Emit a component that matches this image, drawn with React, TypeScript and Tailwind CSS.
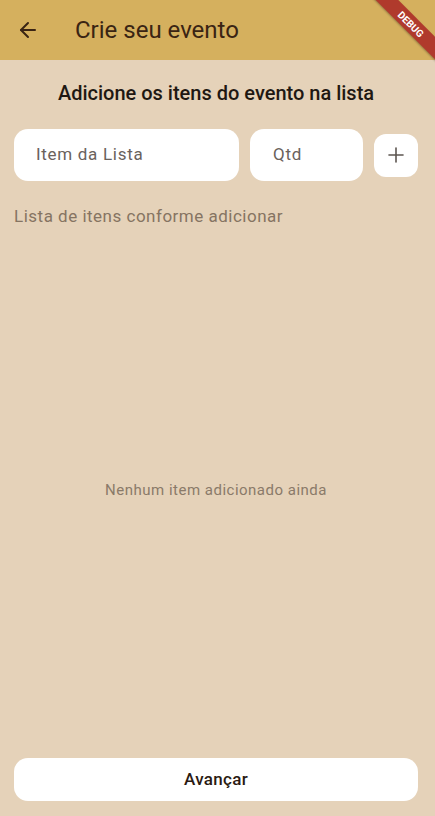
import { ArrowLeft, Plus } from "lucide-react";

const App = () => {
  return (
    <div
      className="relative flex h-[816px] w-full flex-col overflow-hidden bg-[#e5d2b9]"
      style={{ fontFamily: "Roboto, 'Noto Sans', sans-serif" }}
    >
      {/* cabeçalho */}
      <header className="flex h-[60px] shrink-0 items-center bg-[#d5b05e] px-4">
        <ArrowLeft className="h-6 w-6 text-[#3a2413]" strokeWidth={2} />
        <h1 className="ml-[35px] text-[24px] text-[#3a2413]">Crie seu evento</h1>
      </header>

      {/* faixa debug */}
      <div className="pointer-events-none absolute right-[-26px] top-[16px] flex h-[16px] w-[100px] rotate-45 items-center justify-center bg-[#b03a2c] text-[10px] font-bold text-white shadow-[0_1px_2px_rgba(0,0,0,0.3)]">
        DEBUG
      </div>

      <main className="flex flex-1 flex-col pl-[14px] pr-[17px]">
        <h2 className="mt-[18px] text-center text-[20px] font-medium text-[#1f1812]">
          Adicione os itens do evento na lista
        </h2>

        <div className="mt-[21px] flex items-center">
          <div className="flex h-[52px] w-[225px] items-center rounded-[14px] bg-white pl-[22px] text-[17px] tracking-[0.7px] text-[#6a625c]">
            Item da Lista
          </div>
          <div className="ml-[11px] flex h-[52px] w-[113px] items-center rounded-[14px] bg-white pl-[23px] text-[17px] tracking-[0.7px] text-[#6a625c]">
            Qtd
          </div>
          <button className="ml-[11px] flex h-[43px] w-[44px] items-center justify-center rounded-[12px] bg-white">
            <Plus className="h-6 w-6 text-[#5c5550]" strokeWidth={1.6} />
          </button>
        </div>

        <p className="mt-[23px] text-[17px] tracking-[0.5px] text-[#857462]">
          Lista de itens conforme adicionar
        </p>

        <div className="flex flex-1 items-center justify-center pb-[8px]">
          <p className="text-[15px] tracking-[0.5px] text-[#8a7a69]">Nenhum item adicionado ainda</p>
        </div>

        <button className="mb-[15px] h-[43px] w-full rounded-[14px] bg-white text-[17px] font-medium tracking-[0.3px] text-[#2a1a12]">
          Avançar
        </button>
      </main>
    </div>
  );
};

export default App;
